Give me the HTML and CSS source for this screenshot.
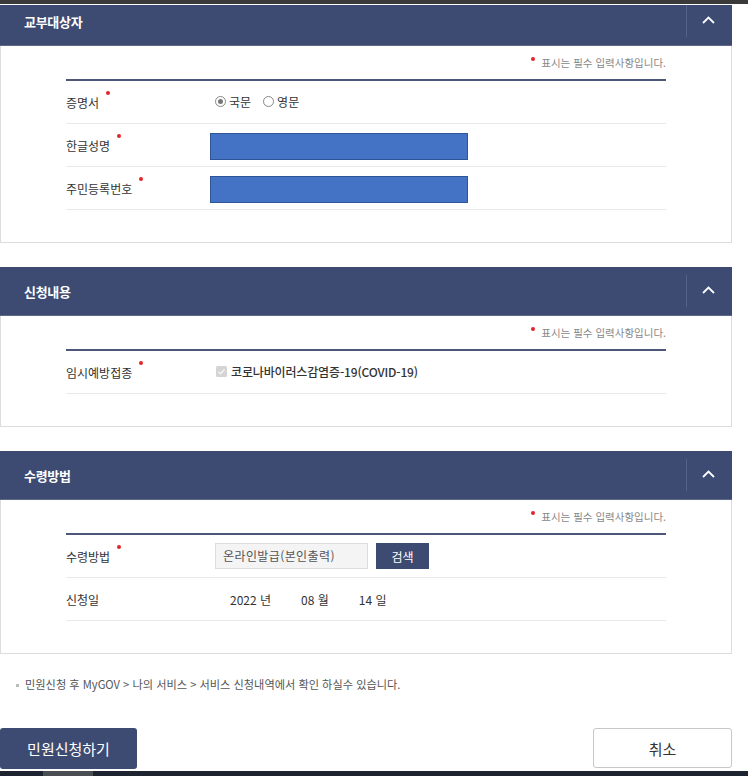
FILE: index.html
```html
<!DOCTYPE html>
<html lang="ko">
<head>
    <meta charset="UTF-8">
    <meta name="viewport" content="width=device-width, initial-scale=1.0">
    <title>민원신청</title>
    <link rel="stylesheet" href="styles.css">
</head>
<body>
    <div class="topbar"></div>

    <div class="page">
        <div class="panels">
            <section class="panel">
                <div class="panel-head">
                    <h2 class="panel-title">교부대상자</h2>
                    <button class="toggle" type="button" aria-label="접기">
                        <svg width="13" height="8" viewBox="0 0 13 8"><path d="M1 7 L6.5 1.5 L12 7" fill="none" stroke="#fff" stroke-width="1.8"/></svg>
                    </button>
                </div>
                <div class="panel-body">
                    <p class="req-note"><span class="dot"></span>표시는 필수 입력사항입니다.</p>
                    <div class="form">
                        <div class="form-row">
                            <div class="label"><span class="req">증명서</span></div>
                            <div class="value">
                                <label class="radio checked"><span class="mark"></span>국문</label>
                                <label class="radio"><span class="mark"></span>영문</label>
                            </div>
                        </div>
                        <div class="form-row">
                            <div class="label"><span class="req">한글성명</span></div>
                            <div class="value"><div class="masked"></div></div>
                        </div>
                        <div class="form-row">
                            <div class="label"><span class="req">주민등록번호</span></div>
                            <div class="value"><div class="masked"></div></div>
                        </div>
                    </div>
                </div>
            </section>

            <section class="panel">
                <div class="panel-head">
                    <h2 class="panel-title">신청내용</h2>
                    <button class="toggle" type="button" aria-label="접기">
                        <svg width="13" height="8" viewBox="0 0 13 8"><path d="M1 7 L6.5 1.5 L12 7" fill="none" stroke="#fff" stroke-width="1.8"/></svg>
                    </button>
                </div>
                <div class="panel-body">
                    <p class="req-note"><span class="dot"></span>표시는 필수 입력사항입니다.</p>
                    <div class="form">
                        <div class="form-row">
                            <div class="label"><span class="req">임시예방접종</span></div>
                            <div class="value">
                                <label class="check">
                                    <svg width="11" height="11" viewBox="0 0 11 11"><rect width="11" height="11" rx="1.5" fill="#d4d4d4"/><path d="M2.5 5.8 L4.6 7.8 L8.6 3.3" fill="none" stroke="#f4f4f4" stroke-width="1.4"/></svg>
                                    코로나바이러스감염증-19(COVID-19)
                                </label>
                            </div>
                        </div>
                    </div>
                </div>
            </section>

            <section class="panel">
                <div class="panel-head">
                    <h2 class="panel-title">수령방법</h2>
                    <button class="toggle" type="button" aria-label="접기">
                        <svg width="13" height="8" viewBox="0 0 13 8"><path d="M1 7 L6.5 1.5 L12 7" fill="none" stroke="#fff" stroke-width="1.8"/></svg>
                    </button>
                </div>
                <div class="panel-body">
                    <p class="req-note"><span class="dot"></span>표시는 필수 입력사항입니다.</p>
                    <div class="form">
                        <div class="form-row">
                            <div class="label"><span class="req">수령방법</span></div>
                            <div class="value">
                                <div class="readonly-input">온라인발급(본인출력)</div>
                                <button class="search-btn" type="button">검색</button>
                            </div>
                        </div>
                        <div class="form-row">
                            <div class="label">신청일</div>
                            <div class="value dates">
                                <span>2022 년</span>
                                <span>08 월</span>
                                <span>14 일</span>
                            </div>
                        </div>
                    </div>
                </div>
            </section>
        </div>

        <p class="notice">민원신청 후 MyGOV &gt; 나의 서비스 &gt; 서비스 신청내역에서 확인 하실수 있습니다.</p>

        <div class="actions">
            <button class="submit-btn" type="button">민원신청하기</button>
            <button class="cancel-btn" type="button">취소</button>
        </div>
    </div>

    <div class="bottombar"><span class="thumb"></span></div>
</body>
</html>
```

FILE: styles.css
```css
* {
    margin: 0;
    padding: 0;
    box-sizing: border-box;
}

html {
    overflow: hidden;
}

body {
    font-family: "Noto Sans CJK KR", "Noto Sans", sans-serif;
    color: #333;
    background: #fff;
}

/* overlays (window chrome at top and bottom) */
.topbar {
    position: fixed;
    top: 0;
    left: 0;
    width: 748px;
    height: 5px;
    background: #3a3a3a;
    border-bottom: 1px solid #fff;
    z-index: 10;
}

.bottombar {
    position: fixed;
    left: 0;
    bottom: 0;
    width: 748px;
    height: 5px;
    background: #1d2430;
    z-index: 10;
}

.bottombar .thumb {
    display: block;
    margin-left: 43px;
    width: 50px;
    height: 5px;
    background: #4a4d52;
}

.page {
    width: 732px;
    margin-top: -3px;
}

.panels {
    display: flex;
    flex-direction: column;
    gap: 24px;
}

.panel-head {
    display: flex;
    align-items: center;
    height: 49px;
    background: #3d4b72;
    border-bottom: 1px solid #5d6889;
}

.panel-title {
    flex: 1;
    padding-left: 24px;
    font-size: 13px;
    font-weight: 700;
    color: #fff;
    letter-spacing: -0.3px;
}

.toggle {
    width: 46px;
    height: 32px;
    border: none;
    border-left: 1px solid #56628a;
    background: transparent;
    display: flex;
    align-items: center;
    justify-content: center;
    padding-bottom: 3px;
    padding-right: 3px;
}

.panel-body {
    border: 1px solid #dcdcdc;
    border-top: none;
    padding: 10px 65px 32px 65px;
}

.req-note {
    height: 14px;
    text-align: right;
    font-size: 10.5px;
    line-height: 14px;
    color: #888;
    margin-bottom: 9px;
}

.req-note .dot {
    display: inline-block;
    width: 4px;
    height: 4px;
    border-radius: 50%;
    background: #e0262b;
    margin-right: 6px;
    margin-top: 1px;
    vertical-align: top;
}

.form {
    border-top: 2px solid #4c5779;
}

.form-row {
    display: grid;
    grid-template-columns: 149px 1fr;
    height: 43px;
    border-bottom: 1px solid #e9e9e9;
}

.label {
    display: flex;
    align-items: center;
    font-size: 12px;
    color: #333;
}

.req {
    position: relative;
}

.req::after {
    content: "";
    position: absolute;
    left: 100%;
    top: -3px;
    margin-left: 7px;
    width: 4px;
    height: 4px;
    border-radius: 50%;
    background: #e0262b;
}

.value {
    display: flex;
    align-items: center;
    font-size: 12px;
}

.radio {
    display: flex;
    align-items: center;
    gap: 3px;
    margin-right: 12px;
    margin-top: -2px;
}

.radio .mark {
    width: 11px;
    height: 11px;
    border: 1px solid #888;
    border-radius: 50%;
    background: #fff;
    display: flex;
    align-items: center;
    justify-content: center;
}

.radio.checked .mark::after {
    content: "";
    width: 5px;
    height: 5px;
    border-radius: 50%;
    background: #777;
}

.masked {
    margin-left: -5px;
    margin-top: 2px;
    width: 258px;
    height: 27px;
    background: #4472c4;
    border: 1px solid #2f5597;
}

.check {
    display: flex;
    align-items: center;
    gap: 4px;
    font-weight: 500;
    letter-spacing: -0.15px;
    margin-left: 1px;
    margin-top: -2px;
}

.readonly-input {
    width: 153px;
    height: 26px;
    background: #f4f4f4;
    border: 1px solid #dcdcdc;
    padding-left: 7px;
    line-height: 24px;
    color: #555;
    letter-spacing: 0.4px;
}

.search-btn {
    margin-left: 8px;
    width: 53px;
    height: 26px;
    border: none;
    background: #3d4b72;
    color: #fff;
    font-family: inherit;
    font-size: 12px;
}

.dates {
    padding-left: 15px;
    gap: 30px;
}

.notice {
    height: 16px;
    margin-top: 22px;
    padding-left: 16px;
    font-size: 11.2px;
    line-height: 16px;
    color: #555;
}

.notice::before {
    content: "";
    display: inline-block;
    width: 3px;
    height: 3px;
    background: #bbb;
    margin-right: 6px;
    vertical-align: middle;
}

.actions {
    display: flex;
    justify-content: space-between;
    margin-top: 36px;
}

.submit-btn {
    width: 137px;
    height: 41px;
    border: none;
    border-radius: 3px;
    background: #3d4b72;
    color: #fff;
    font-family: inherit;
    font-size: 15px;
}

.cancel-btn {
    width: 139px;
    height: 40px;
    border: 1px solid #c8c8c8;
    border-radius: 3px;
    background: #fff;
    color: #333;
    font-family: inherit;
    font-size: 15px;
}
```
